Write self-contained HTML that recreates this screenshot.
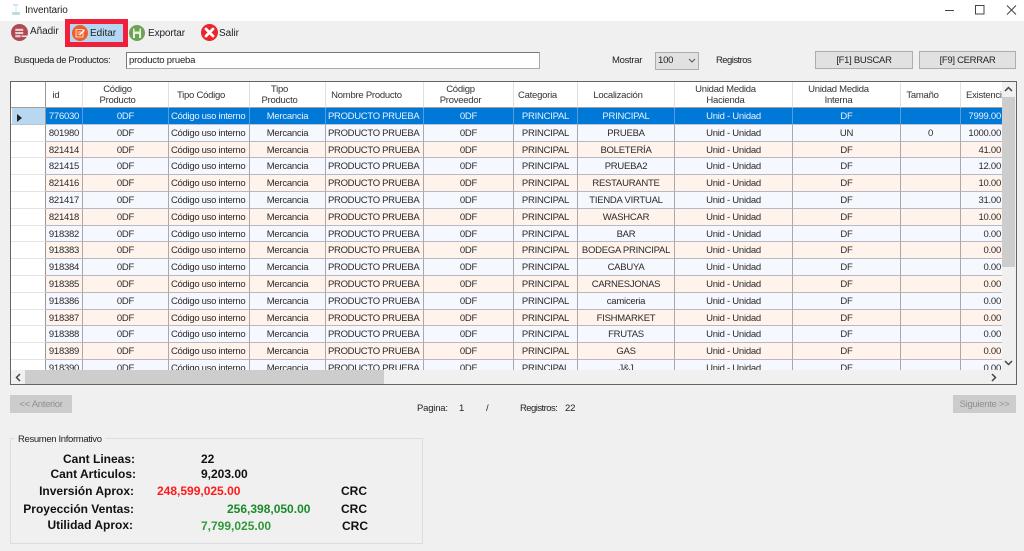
<!DOCTYPE html>
<html lang="es"><head><meta charset="utf-8"><title>Inventario</title>
<style>
html,body{margin:0;padding:0}
body{width:1024px;height:551px;position:relative;overflow:hidden;background:#f0f0f0;font-family:"Liberation Sans",sans-serif;font-size:9.5px;letter-spacing:-.2px;color:#222}
.a{position:absolute;white-space:nowrap}
.t{filter:blur(.3px)}
#title{left:0;top:0;width:1024px;height:21px;background:#fff}
.btn{position:absolute;background:#e1e1e1;border:1px solid #adadad;box-sizing:border-box;text-align:center;color:#222;font-size:9.5px;letter-spacing:-.3px;line-height:17px}
.dis{background:#ccc;border:1px solid #ccc;color:#8f8f8f}
.sm{letter-spacing:-.55px}
#grid{position:absolute;left:10px;top:81px;width:1007px;height:304px;box-sizing:border-box;border:1px solid #646464;background:#f0f0f0;overflow:hidden}
#tw{position:absolute;left:0;top:0;width:991px;height:288px;overflow:hidden}
table{border-collapse:separate;border-spacing:0;table-layout:fixed;width:994px;font-size:9.5px}
th{height:24px;padding:1px 16px 0 0;background:#fff;font-weight:normal;line-height:11px;border-right:1px solid #e0e0e0;border-bottom:1px solid #a0a0a0;overflow:hidden;white-space:nowrap;text-align:center;color:#333;box-sizing:content-box;letter-spacing:-.25px}
td{height:13.8px;padding:2px 0 0;border-right:1px solid #aaa8aa;border-bottom:1px solid #b8b8c0;text-align:center;overflow:hidden;white-space:nowrap;line-height:13.8px;color:#2a2a2a;letter-spacing:-.25px}
td.h{background:#fff;border-right:1px solid #999;border-bottom:1px solid #e4e4e4}
tr.p td{background:#fff3eb}
tr.b td{background:#f6f8ff}
tr.p td.h,tr.b td.h{background:#fff}
tr.s td{background:#0078d7;color:#e8f2fb;border-bottom-color:#b8c4d4;border-right-color:#5a9bd8}
tr.s td.h{background:linear-gradient(90deg,#fff 1px,#b8d8f2 1px);border-right-color:#999}
td.l{text-align:left;padding-left:2px;letter-spacing:-.3px}
td.n{text-align:right;padding-right:3px}
.sb{font-size:12px;letter-spacing:0;font-weight:bold;line-height:14px;color:#111}
</style></head><body>
<div class="a" id="title"></div>
<svg class="a" style="left:10px;top:3px" width="12" height="14" viewBox="0 0 12 14"><path d="M3 1h5v2H3z" fill="#cfe6ea"/><path d="M2 9h8v3H2z" fill="#bcdde2"/><path d="M5 3h2v6H5z" fill="#e6f2f4"/></svg>
<div class="a t" style="left:25px;top:4px;font-size:10px;letter-spacing:-.12px;line-height:13px;color:#222">Inventario</div>
<svg class="a" style="left:940px;top:0" width="84" height="21" viewBox="0 0 84 21" fill="none" stroke="#444"><path d="M5 10.500h9" stroke-width="1"/><rect x="35.500" y="5.500" width="8.500" height="8.500" stroke-width="1"/><path d="M67 5.500l9 9M76 5.500l-9 9" stroke-width="1"/></svg>

<div class="a" style="left:65px;top:19px;width:63px;height:28px;box-sizing:border-box;border:5px solid #f01f3c;background:#b5d7f3"></div>
<svg class="a" style="left:11px;top:24px" width="17" height="17" viewBox="0 0 16 16"><circle cx="8" cy="8" r="8" fill="#b04a52"/><rect x="4" y="4.500" width="7.500" height="2" fill="#e8cfd2"/><rect x="4" y="7.500" width="7.500" height="2" fill="#e8cfd2"/><rect x="4" y="10.500" width="5" height="2" fill="#e8cfd2"/><path d="M10 11.500h5" stroke="#fff" stroke-width="1.200"/></svg>
<div class="a t" style="left:30px;top:25px;line-height:13px;font-size:10px;letter-spacing:-.05px">Añadir</div>
<svg class="a" style="left:72px;top:25px" width="16" height="16" viewBox="0 0 16 16"><circle cx="8" cy="8" r="8" fill="#ee5f28"/><path d="M4 4.500h7v7.500H4z" fill="none" stroke="#fbd5c0" stroke-width="1.100"/><path d="M5.500 7h4M5.500 9h2" stroke="#fbd5c0"/><path d="M7.500 10l5-5" stroke="#fff" stroke-width="1.300"/></svg>
<div class="a t" style="left:90px;top:27px;line-height:13px;font-size:10px;letter-spacing:0">Editar</div>
<svg class="a" style="left:129px;top:25px" width="16" height="16" viewBox="0 0 16 16"><circle cx="8" cy="8" r="8" fill="#6fa255"/><path d="M4 3.500h8v9.500H4z" fill="#e8f0df"/><path d="M5.500 3.500h5v3h-5z" fill="#6fa255"/><path d="M6 9h4v4H6z" fill="#6fa255"/></svg>
<div class="a t" style="left:148px;top:27px;line-height:13px;font-size:10px;letter-spacing:-.1px">Exportar</div>
<svg class="a" style="left:201px;top:24px" width="17" height="17" viewBox="0 0 17 17"><circle cx="8.500" cy="8.500" r="8.500" fill="#e9262b"/><path d="M5 5l7 7M12 5l-7 7" stroke="#fff" stroke-width="2.800" stroke-linecap="round"/></svg>
<div class="a t" style="left:219px;top:27px;line-height:13px;font-size:10px;letter-spacing:0">Salir</div>

<div class="a t" style="left:14px;top:54px;line-height:14px;letter-spacing:-.35px">Busqueda de Productos:</div>
<div class="a t" style="left:126px;top:52px;width:414px;height:17px;box-sizing:border-box;background:#fff;border:1px solid #7a7a7a;border-right-color:#a8a8a8;border-bottom-color:#a8a8a8;padding-left:2px;line-height:15px">producto prueba</div>
<div class="a t" style="left:612px;top:54px;line-height:13px;letter-spacing:-.3px">Mostrar</div>
<div class="a" style="left:655px;top:52px;width:44px;height:18px;box-sizing:border-box;background:#e1e1e1;border:1px solid #adadad"></div>
<div class="a t" style="left:658px;top:54px;line-height:13px">100</div>
<svg class="a" style="left:688px;top:58px" width="8" height="6" viewBox="0 0 8 6"><path d="M1 1l3 3 3-3" fill="none" stroke="#555"/></svg>
<div class="a t sm" style="left:716px;top:54px;line-height:13px">Registros</div>
<div class="btn t" style="left:815px;top:51px;width:98px;height:18px">[F1] BUSCAR</div>
<div class="btn t" style="left:919px;top:51px;width:97px;height:18px">[F9] CERRAR</div>

<div id="grid"><div id="tw" class="t"><table>
<colgroup><col style="width:35px"><col style="width:37px"><col style="width:86px"><col style="width:81px"><col style="width:76px"><col style="width:98px"><col style="width:90px"><col style="width:64px"><col style="width:97px"><col style="width:118px"><col style="width:108px"><col style="width:60px"><col style="width:44px"></colgroup>
<tr><th style="border-right-color:#999"></th><th>id</th><th>Código<br>Producto</th><th>Tipo Código</th><th>Tipo<br>Producto</th><th>Nombre Producto</th><th>Códigp<br>Proveedor</th><th>Categoria</th><th>Localización</th><th>Unidad Medida<br>Hacienda</th><th>Unidad Medida<br>Interna</th><th>Tamaño</th><th style="text-align:left;padding:1px 0 0 5px">Existencia</th></tr>
<tr class="s"><td class="h"><svg width="6" height="8" viewBox="0 0 6 8" style="display:block;margin:2px 0 0 6px"><path d="M0 0l5 4-5 4z" fill="#222"/></svg></td><td>776030</td><td>0DF</td><td class="l">Código uso interno</td><td>Mercancia</td><td class="l">PRODUCTO PRUEBA</td><td>0DF</td><td>PRINCIPAL</td><td>PRINCIPAL</td><td>Unid - Unidad</td><td>DF</td><td></td><td class="n">7999.00</td></tr>
<tr class="b"><td class="h"></td><td>801980</td><td>0DF</td><td class="l">Código uso interno</td><td>Mercancia</td><td class="l">PRODUCTO PRUEBA</td><td>0DF</td><td>PRINCIPAL</td><td>PRUEBA</td><td>Unid - Unidad</td><td>UN</td><td>0</td><td class="n">1000.00</td></tr>
<tr class="p"><td class="h"></td><td>821414</td><td>0DF</td><td class="l">Código uso interno</td><td>Mercancia</td><td class="l">PRODUCTO PRUEBA</td><td>0DF</td><td>PRINCIPAL</td><td>BOLETERÍA</td><td>Unid - Unidad</td><td>DF</td><td></td><td class="n">41.00</td></tr>
<tr class="b"><td class="h"></td><td>821415</td><td>0DF</td><td class="l">Código uso interno</td><td>Mercancia</td><td class="l">PRODUCTO PRUEBA</td><td>0DF</td><td>PRINCIPAL</td><td>PRUEBA2</td><td>Unid - Unidad</td><td>DF</td><td></td><td class="n">12.00</td></tr>
<tr class="p"><td class="h"></td><td>821416</td><td>0DF</td><td class="l">Código uso interno</td><td>Mercancia</td><td class="l">PRODUCTO PRUEBA</td><td>0DF</td><td>PRINCIPAL</td><td>RESTAURANTE</td><td>Unid - Unidad</td><td>DF</td><td></td><td class="n">10.00</td></tr>
<tr class="b"><td class="h"></td><td>821417</td><td>0DF</td><td class="l">Código uso interno</td><td>Mercancia</td><td class="l">PRODUCTO PRUEBA</td><td>0DF</td><td>PRINCIPAL</td><td>TIENDA VIRTUAL</td><td>Unid - Unidad</td><td>DF</td><td></td><td class="n">31.00</td></tr>
<tr class="p"><td class="h"></td><td>821418</td><td>0DF</td><td class="l">Código uso interno</td><td>Mercancia</td><td class="l">PRODUCTO PRUEBA</td><td>0DF</td><td>PRINCIPAL</td><td>WASHCAR</td><td>Unid - Unidad</td><td>DF</td><td></td><td class="n">10.00</td></tr>
<tr class="b"><td class="h"></td><td>918382</td><td>0DF</td><td class="l">Código uso interno</td><td>Mercancia</td><td class="l">PRODUCTO PRUEBA</td><td>0DF</td><td>PRINCIPAL</td><td>BAR</td><td>Unid - Unidad</td><td>DF</td><td></td><td class="n">0.00</td></tr>
<tr class="p"><td class="h"></td><td>918383</td><td>0DF</td><td class="l">Código uso interno</td><td>Mercancia</td><td class="l">PRODUCTO PRUEBA</td><td>0DF</td><td>PRINCIPAL</td><td>BODEGA PRINCIPAL</td><td>Unid - Unidad</td><td>DF</td><td></td><td class="n">0.00</td></tr>
<tr class="b"><td class="h"></td><td>918384</td><td>0DF</td><td class="l">Código uso interno</td><td>Mercancia</td><td class="l">PRODUCTO PRUEBA</td><td>0DF</td><td>PRINCIPAL</td><td>CABUYA</td><td>Unid - Unidad</td><td>DF</td><td></td><td class="n">0.00</td></tr>
<tr class="p"><td class="h"></td><td>918385</td><td>0DF</td><td class="l">Código uso interno</td><td>Mercancia</td><td class="l">PRODUCTO PRUEBA</td><td>0DF</td><td>PRINCIPAL</td><td>CARNESJONAS</td><td>Unid - Unidad</td><td>DF</td><td></td><td class="n">0.00</td></tr>
<tr class="b"><td class="h"></td><td>918386</td><td>0DF</td><td class="l">Código uso interno</td><td>Mercancia</td><td class="l">PRODUCTO PRUEBA</td><td>0DF</td><td>PRINCIPAL</td><td>camiceria</td><td>Unid - Unidad</td><td>DF</td><td></td><td class="n">0.00</td></tr>
<tr class="p"><td class="h"></td><td>918387</td><td>0DF</td><td class="l">Código uso interno</td><td>Mercancia</td><td class="l">PRODUCTO PRUEBA</td><td>0DF</td><td>PRINCIPAL</td><td>FISHMARKET</td><td>Unid - Unidad</td><td>DF</td><td></td><td class="n">0.00</td></tr>
<tr class="b"><td class="h"></td><td>918388</td><td>0DF</td><td class="l">Código uso interno</td><td>Mercancia</td><td class="l">PRODUCTO PRUEBA</td><td>0DF</td><td>PRINCIPAL</td><td>FRUTAS</td><td>Unid - Unidad</td><td>DF</td><td></td><td class="n">0.00</td></tr>
<tr class="p"><td class="h"></td><td>918389</td><td>0DF</td><td class="l">Código uso interno</td><td>Mercancia</td><td class="l">PRODUCTO PRUEBA</td><td>0DF</td><td>PRINCIPAL</td><td>GAS</td><td>Unid - Unidad</td><td>DF</td><td></td><td class="n">0.00</td></tr>
<tr class="b"><td class="h"></td><td>918390</td><td>0DF</td><td class="l">Código uso interno</td><td>Mercancia</td><td class="l">PRODUCTO PRUEBA</td><td>0DF</td><td>PRINCIPAL</td><td>J&amp;J</td><td>Unid - Unidad</td><td>DF</td><td></td><td class="n">0.00</td></tr>
</table></div>
<div class="a" style="left:991px;top:0;width:14px;height:288px;background:#f0f0f0"></div>
<div class="a" style="left:991px;top:15px;width:13px;height:170px;background:#cdcdcd"></div>
<svg class="a" style="left:993px;top:4px" width="9" height="6" viewBox="0 0 9 6"><path d="M1 5l3.500-3.500L8 5" fill="none" stroke="#444" stroke-width="1.500"/></svg>
<svg class="a" style="left:993px;top:278px" width="9" height="6" viewBox="0 0 9 6"><path d="M1 1l3.500 3.500L8 1" fill="none" stroke="#444" stroke-width="1.500"/></svg>
<div class="a" style="left:0;top:288px;width:1005px;height:14px;background:#f0f0f0"></div>
<div class="a" style="left:14px;top:288px;width:359px;height:14px;background:#cdcdcd"></div>
<svg class="a" style="left:4px;top:291px" width="6" height="9" viewBox="0 0 6 9"><path d="M5 1L1.500 4.500 5 8" fill="none" stroke="#444" stroke-width="1.500"/></svg>
<svg class="a" style="left:980px;top:291px" width="6" height="9" viewBox="0 0 6 9"><path d="M1 1l3.500 3.500L1 8" fill="none" stroke="#444" stroke-width="1.500"/></svg>
</div>

<div class="btn dis t" style="left:10px;top:395px;width:62px;height:18px">&lt;&lt; Anterior</div>
<div class="btn dis t" style="left:953px;top:395px;width:63px;height:18px">Siguiente &gt;&gt;</div>
<div class="a t" style="left:417px;top:402px;line-height:13px">Pagina:</div>
<div class="a t" style="left:459px;top:402px;line-height:13px">1</div>
<div class="a t" style="left:486px;top:402px;line-height:13px">/</div>
<div class="a t sm" style="left:520px;top:402px;line-height:13px">Registros:</div>
<div class="a t" style="left:565px;top:402px;line-height:13px">22</div>

<div class="a" style="left:10px;top:438px;width:413px;height:106px;box-sizing:border-box;border:1px solid #dcdcdc"></div>
<div class="a t" style="left:15px;top:433px;padding:0 3px;background:#f0f0f0;line-height:13px;letter-spacing:-.35px">Resumen Informativo</div>
<div class="t">
<div class="a sb" style="right:889px;top:452px">Cant Lineas:</div>
<div class="a sb" style="right:888px;top:467px">Cant Articulos:</div>
<div class="a sb" style="right:890px;top:484px">Inversión Aprox:</div>
<div class="a sb" style="right:890px;top:502px">Proyección Ventas:</div>
<div class="a sb" style="right:891px;top:518px">Utilidad Aprox:</div>
<div class="a sb" style="left:201px;top:452px">22</div>
<div class="a sb" style="left:201px;top:467px">9,203.00</div>
<div class="a sb" style="left:157px;top:484px;color:#ff1a1a">248,599,025.00</div>
<div class="a sb" style="left:227px;top:502px;color:#1a8a2a">256,398,050.00</div>
<div class="a sb" style="left:201px;top:519px;color:#2f9a3a">7,799,025.00</div>
<div class="a sb" style="left:341px;top:484px">CRC</div>
<div class="a sb" style="left:341px;top:502px">CRC</div>
<div class="a sb" style="left:342px;top:519px">CRC</div>
</div>
</body></html>
